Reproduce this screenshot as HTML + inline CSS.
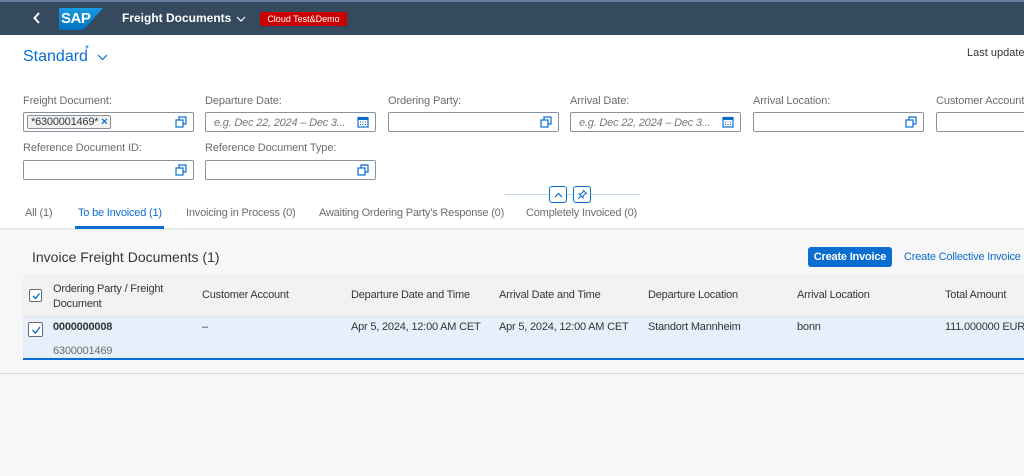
<!DOCTYPE html>
<html><head><style>
*{box-sizing:border-box;margin:0;padding:0}
body{width:1024px;height:476px;overflow:hidden;font-family:"Liberation Sans",Arial,sans-serif;background:#f7f7f7;position:relative;color:#32363a}
.a{position:absolute;white-space:nowrap}
.hdr{left:0;top:0;width:1024px;height:35px;background:#354a5f;border-top:2px solid #6a7c9e}
.lbl{font-size:11px;color:#6a6d70;letter-spacing:-0.1px}
.inp{height:20px;border:1px solid #89919a;background:#fff;border-radius:2px}
.ph{font-size:11px;color:#74777a;font-style:italic;top:4px;left:8px;letter-spacing:-0.2px}
.th,.td{font-size:11px;color:#32363a;letter-spacing:-0.2px}
.tab{font-size:11px;color:#6a6d70;letter-spacing:-0.2px;top:207px}
.cb{width:13px;height:13px;border:1px solid #6a6d70;background:#fff;border-radius:2px}
</style></head><body>
<svg width="0" height="0" style="position:absolute"><defs>
<symbol id="vh" viewBox="0 0 12 12"><rect x="1" y="4" width="7" height="7" fill="none" stroke="#0a6ed1" stroke-width="1.2"/><path d="M4 4V1h7v7H8" fill="none" stroke="#0a6ed1" stroke-width="1.2"/></symbol>
<symbol id="cal" viewBox="0 0 12 12"><rect x="1" y="1.5" width="10" height="9.5" fill="none" stroke="#0a6ed1" stroke-width="1.2"/><rect x="1" y="1.5" width="10" height="2.5" fill="#0a6ed1"/><path d="M3 6h1M5.5 6h1M8 6h1M3 8.5h1M5.5 8.5h1M8 8.5h1" stroke="#0a6ed1"/></symbol>
</defs></svg>
<div class="a hdr">
 <svg class="a" style="left:33px;top:10px" width="8" height="12"><path d="M6 1L1.5 6 6 11" fill="none" stroke="#fff" stroke-width="2"/></svg>
 <div class="a" style="left:59px;top:6px;width:44px;height:22px;background:linear-gradient(#1a9be0,#0070c0);clip-path:polygon(0 0,100% 0,55% 100%,0 100%)"></div>
 <div class="a" style="left:61px;top:8px;color:#fff;font-size:15px;font-weight:bold;letter-spacing:-0.5px">SAP</div>
 <div class="a" style="left:122px;top:9px;color:#fff;font-size:12px;font-weight:bold">Freight Documents</div>
 <svg class="a" style="left:236px;top:14px" width="10" height="6"><path d="M1 1l4 4 4-4" fill="none" stroke="#fff" stroke-width="1.2"/></svg>
 <div class="a" style="left:260px;top:10px;width:87px;height:14px;background:#c00;border-radius:2px;color:#fff;font-size:9px;text-align:center;line-height:14px">Cloud Test&amp;Demo</div>
</div>
<div class="a" style="left:0;top:35px;width:1024px;height:193px;background:#fff;box-shadow:0 1px 2px rgba(0,0,0,.12)"></div>
<div class="a" style="left:23px;top:48px;font-size:16px;color:#0a6ed1">Standard</div>
<div class="a" style="left:85px;top:44px;font-size:10px;color:#0a6ed1">*</div>
<svg class="a" style="left:97px;top:54px" width="11" height="7"><path d="M1 1l4.5 4.5L10 1" fill="none" stroke="#0a6ed1" stroke-width="1.2"/></svg>
<div class="a" style="left:967px;top:47px;font-size:11px;color:#32363a">Last updated</div>

<div class="a lbl" style="left:23px;top:95px">Freight Document:</div>
<div class="a lbl" style="left:205px;top:95px">Departure Date:</div>
<div class="a lbl" style="left:388px;top:95px">Ordering Party:</div>
<div class="a lbl" style="left:570px;top:95px">Arrival Date:</div>
<div class="a lbl" style="left:753px;top:95px">Arrival Location:</div>
<div class="a lbl" style="left:936px;top:95px">Customer Account:</div>
<div class="a inp" style="left:23px;top:112px;width:171px"><div class="a" style="left:3px;top:2px;height:14px;border:1px solid #89919a;border-radius:2px;background:#f2f2f2;font-size:11px;padding:0 3px;line-height:12px;letter-spacing:-0.2px">*6300001469* <b style="color:#0a6ed1">×</b></div><svg class="a" style="right:6px;top:3px" width="12" height="12"><use href="#vh"/></svg></div>
<div class="a inp" style="left:205px;top:112px;width:171px"><div class="a ph">e.g. Dec 22, 2024 – Dec 3...</div><svg class="a" style="right:6px;top:3px" width="12" height="12"><use href="#cal"/></svg></div>
<div class="a inp" style="left:388px;top:112px;width:171px"><svg class="a" style="right:6px;top:3px" width="12" height="12"><use href="#vh"/></svg></div>
<div class="a inp" style="left:570px;top:112px;width:171px"><div class="a ph">e.g. Dec 22, 2024 – Dec 3...</div><svg class="a" style="right:6px;top:3px" width="12" height="12"><use href="#cal"/></svg></div>
<div class="a inp" style="left:753px;top:112px;width:171px"><svg class="a" style="right:6px;top:3px" width="12" height="12"><use href="#vh"/></svg></div>
<div class="a inp" style="left:936px;top:112px;width:100px"></div>
<div class="a lbl" style="left:23px;top:142px">Reference Document ID:</div>
<div class="a lbl" style="left:205px;top:142px">Reference Document Type:</div>
<div class="a inp" style="left:23px;top:160px;width:171px"><svg class="a" style="right:6px;top:3px" width="12" height="12"><use href="#vh"/></svg></div>
<div class="a inp" style="left:205px;top:160px;width:171px"><svg class="a" style="right:6px;top:3px" width="12" height="12"><use href="#vh"/></svg></div>

<div class="a" style="left:505px;top:194px;width:135px;height:1px;background:#c4d7ef"></div>
<div class="a" style="left:549px;top:186px;width:18px;height:17px;border:1px solid #0a6ed1;border-radius:3px;background:#fff"><svg class="a" style="left:4px;top:5px" width="9" height="6"><path d="M1 5l3.5-3.5L8 5" fill="none" stroke="#0a6ed1" stroke-width="1.2"/></svg></div>
<div class="a" style="left:573px;top:186px;width:18px;height:17px;border:1px solid #0a6ed1;border-radius:3px;background:#fff"><svg class="a" style="left:3px;top:2px" width="11" height="11"><path d="M6 1l4 4M7 2L4 5 2 5 6 9 6 7 9 4M4 7l-3 3" fill="none" stroke="#0a6ed1" stroke-width="1"/></svg></div>

<div class="a tab" style="left:25px">All (1)</div>
<div class="a tab" style="left:78px;color:#0a6ed1">To be Invoiced (1)</div>
<div class="a" style="left:75px;top:226px;width:89px;height:3px;background:#0a6ed1"></div>
<div class="a tab" style="left:186px">Invoicing in Process (0)</div>
<div class="a tab" style="left:319px">Awaiting Ordering Party's Response (0)</div>
<div class="a tab" style="left:526px">Completely Invoiced (0)</div>

<div class="a" style="left:32px;top:249px;font-size:14px">Invoice Freight Documents (1)</div>
<div class="a" style="left:808px;top:247px;width:84px;height:20px;background:#0a6ed1;border-radius:3px;color:#fff;font-size:11px;font-weight:bold;text-align:center;line-height:20px;letter-spacing:-0.2px">Create Invoice</div>
<div class="a" style="left:904px;top:251px;font-size:11px;color:#0a6ed1;letter-spacing:-0.2px">Create Collective Invoice</div>

<div class="a" style="left:23px;top:274px;width:1001px;height:43px;background:#f2f2f2;border-bottom:1px solid #e5e5e5"></div>
<div class="a cb" style="left:29px;top:289px"><svg class="a" style="left:1px;top:1px" width="10" height="10"><path d="M2 5l2.5 2.5L8.5 2.5" fill="none" stroke="#0a6ed1" stroke-width="1.4"/></svg></div>
<div class="a th" style="left:53px;top:282px;line-height:15px">Ordering Party / Freight<br>Document</div>
<div class="a th" style="left:202px;top:289px">Customer Account</div>
<div class="a th" style="left:351px;top:289px">Departure Date and Time</div>
<div class="a th" style="left:499px;top:289px">Arrival Date and Time</div>
<div class="a th" style="left:648px;top:289px">Departure Location</div>
<div class="a th" style="left:797px;top:289px">Arrival Location</div>
<div class="a th" style="left:945px;top:289px">Total Amount</div>

<div class="a" style="left:23px;top:317px;width:1001px;height:43px;background:#e5f0fa;border-bottom:2px solid #0a6ed1"></div>
<div class="a cb" style="left:28px;top:322px;width:15px;height:15px"><svg class="a" style="left:1px;top:1px" width="12" height="12"><path d="M2.5 6l3 3L10 3" fill="none" stroke="#0a6ed1" stroke-width="1.4"/></svg></div>
<div class="a td" style="left:53px;top:321px;font-weight:bold">0000000008</div>
<div class="a td" style="left:53px;top:345px;color:#6a6d70">6300001469</div>
<div class="a td" style="left:202px;top:321px">–</div>
<div class="a td" style="left:351px;top:321px">Apr 5, 2024, 12:00 AM CET</div>
<div class="a td" style="left:499px;top:321px">Apr 5, 2024, 12:00 AM CET</div>
<div class="a td" style="left:648px;top:321px">Standort Mannheim</div>
<div class="a td" style="left:797px;top:321px">bonn</div>
<div class="a td" style="left:945px;top:321px">111.000000 EUR</div>
<div class="a" style="left:0;top:373px;width:1024px;height:1px;background:#d9d9d9"></div>
</body></html>
